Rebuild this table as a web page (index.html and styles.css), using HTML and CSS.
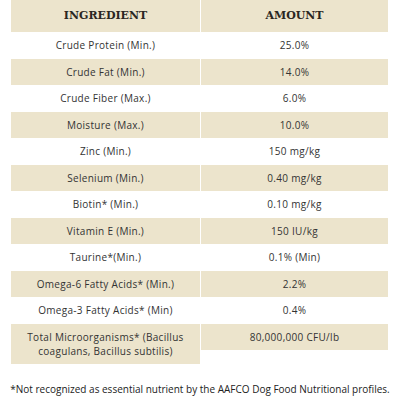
FILE: index.html
```html
<!DOCTYPE html>
<html lang="en">
<head>
    <meta charset="UTF-8">
    <meta name="viewport" content="width=device-width, initial-scale=1.0">
    <title>Guaranteed Analysis</title>
    <link rel="stylesheet" href="styles.css">
</head>
<body>

<div class="analysis">
    <div class="analysis-table">
        <div class="cell head">INGREDIENT</div>
        <div class="cell head">AMOUNT</div>

        <div class="cell">Crude Protein (Min.)</div>
        <div class="cell">25.0%</div>

        <div class="cell shade">Crude Fat (Min.)</div>
        <div class="cell shade">14.0%</div>

        <div class="cell">Crude Fiber (Max.)</div>
        <div class="cell">6.0%</div>

        <div class="cell shade">Moisture (Max.)</div>
        <div class="cell shade">10.0%</div>

        <div class="cell">Zinc (Min.)</div>
        <div class="cell">150 mg/kg</div>

        <div class="cell shade">Selenium (Min.)</div>
        <div class="cell shade">0.40 mg/kg</div>

        <div class="cell">Biotin* (Min.)</div>
        <div class="cell">0.10 mg/kg</div>

        <div class="cell shade">Vitamin E (Min.)</div>
        <div class="cell shade">150 IU/kg</div>

        <div class="cell">Taurine*(Min.)</div>
        <div class="cell">0.1% (Min)</div>

        <div class="cell shade">Omega-6 Fatty Acids* (Min.)</div>
        <div class="cell shade">2.2%</div>

        <div class="cell">Omega-3 Fatty Acids* (Min)</div>
        <div class="cell">0.4%</div>

        <div class="cell shade">Total Microorganisms* (Bacillus coagulans, Bacillus subtilis)</div>
        <div class="cell shade">80,000,000 CFU/lb</div>
    </div>

    <p class="footnote">*Not recognized as essential nutrient by the AAFCO Dog Food Nutritional profiles.</p>
</div>

</body>
</html>
```

FILE: styles.css
```css
/* page */
body {
    margin: 0;
    background: #ffffff;
    font-family: "Open Sans", "Noto Sans", sans-serif;
    color: #333333;
}

.analysis {
    padding: 0 13px 0 11px;
}

/* table: two columns, each cell sized on its own */
.analysis-table {
    display: grid;
    grid-template-columns: 189px 187px;
    column-gap: 1px;
    align-items: start;
}

.cell {
    font-size: 10px;
    line-height: 14px;
    letter-spacing: 0.3px;
    padding: 6.25px 10px;
    text-align: center;
}

.head {
    font-family: "DejaVu Serif", "Liberation Serif", serif;
    font-weight: bold;
    font-size: 11px;
    line-height: 14px;
    letter-spacing: 0;
    padding: 9px 8px;
    color: #2a2622;
    background: #ece4cc;
}

.shade {
    background: #ece4cc;
}

/* footnote */
.footnote {
    margin: 18px -13px 0 -11px;
    font-size: 10px;
    line-height: 14px;
    text-align: center;
    color: #222222;
    white-space: nowrap;
}
```
